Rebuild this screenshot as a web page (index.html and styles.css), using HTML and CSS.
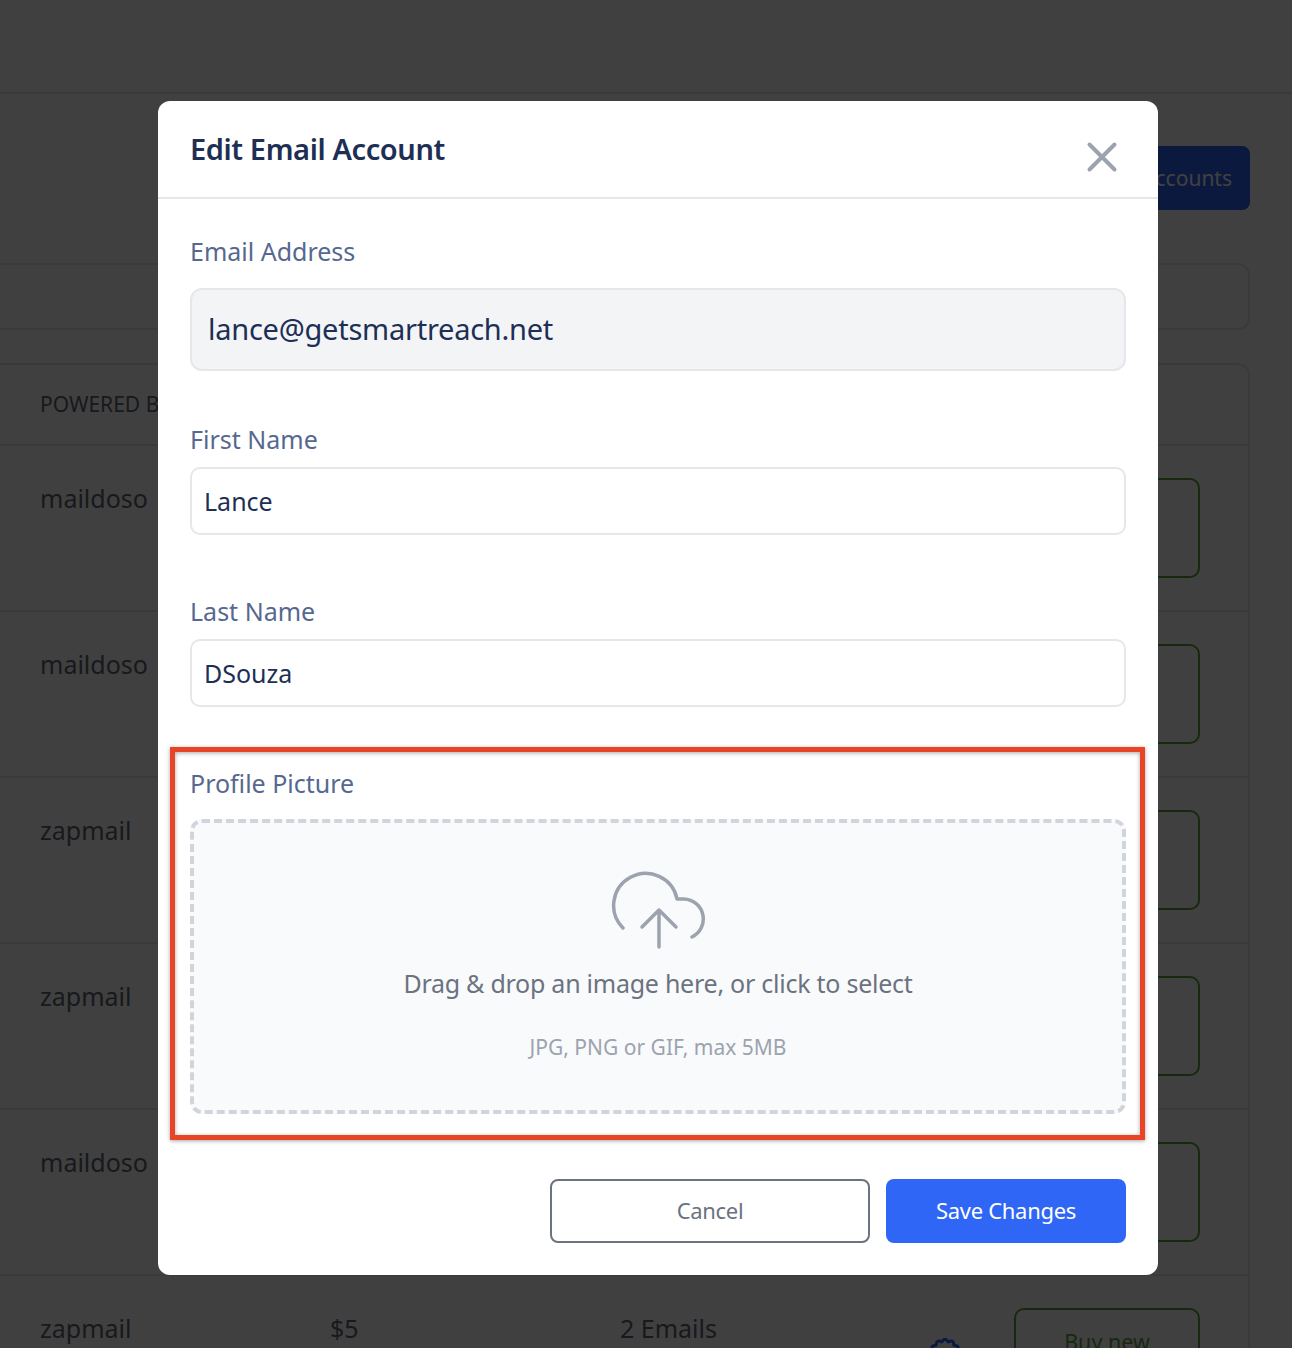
FILE: index.html
```html
<!DOCTYPE html>
<html lang="en">

<head>
    <meta charset="UTF-8">
    <meta name="viewport" content="width=device-width, initial-scale=1.0">
    <title>Email Accounts</title>
    <link rel="stylesheet" href="styles.css">
</head>

<body>
    <svg class="defs">
        <symbol id="badge-shape" viewBox="0 0 32 32">
            <path d="M12.800 3.900Q16 -1.500 19.200 3.900Q24.750 .840 24.800 7.200Q31.200 7.250 28.100 12.800Q33.500 16 28.100 19.200Q31.200 24.750 24.800 24.800Q24.750 31.200 19.200 28.100Q16 33.500 12.800 28.100Q7.250 31.200 7.200 24.800Q.840 24.750 3.900 19.200Q-1.500 16 3.900 12.800Q.840 7.250 7.200 7.200Q7.250 .840 12.800 3.900Z" />
        </symbol>
    </svg>
    <div class="page">
        <div class="topbar"></div>
        <div class="content">
            <div class="actions">
                <button class="primary-btn">Add Accounts</button>
            </div>
            <div class="search-box"></div>
            <div class="card">
                <div class="row head-row">
                    <div>POWERED BY</div>
                    <div>PRICE</div>
                    <div>INCLUDES</div>
                </div>
                <div class="row">
                    <div>maildoso</div>
                    <div>$5</div>
                    <div>2 Emails</div>
                    <div class="row-end">
                        <svg class="badge"><use href="#badge-shape" /></svg>
                        <button class="buy-btn">Buy new<br>accounts</button>
                    </div>
                </div>
                <div class="row">
                    <div>maildoso</div>
                    <div>$5</div>
                    <div>2 Emails</div>
                    <div class="row-end">
                        <svg class="badge"><use href="#badge-shape" /></svg>
                        <button class="buy-btn">Buy new<br>accounts</button>
                    </div>
                </div>
                <div class="row">
                    <div>zapmail</div>
                    <div>$5</div>
                    <div>2 Emails</div>
                    <div class="row-end">
                        <svg class="badge"><use href="#badge-shape" /></svg>
                        <button class="buy-btn">Buy new<br>accounts</button>
                    </div>
                </div>
                <div class="row">
                    <div>zapmail</div>
                    <div>$5</div>
                    <div>2 Emails</div>
                    <div class="row-end">
                        <svg class="badge"><use href="#badge-shape" /></svg>
                        <button class="buy-btn">Buy new<br>accounts</button>
                    </div>
                </div>
                <div class="row">
                    <div>maildoso</div>
                    <div>$5</div>
                    <div>2 Emails</div>
                    <div class="row-end">
                        <svg class="badge"><use href="#badge-shape" /></svg>
                        <button class="buy-btn">Buy new<br>accounts</button>
                    </div>
                </div>
                <div class="row">
                    <div>zapmail</div>
                    <div>$5</div>
                    <div>2 Emails</div>
                    <div class="row-end">
                        <svg class="badge"><use href="#badge-shape" /></svg>
                        <button class="buy-btn">Buy new<br>accounts</button>
                    </div>
                </div>
            </div>
        </div>
    </div>

    <div class="overlay">
        <div class="modal">
            <div class="modal-header">
                <h2>Edit Email Account</h2>
                <svg class="close-icon" viewBox="0 0 32 32">
                    <path d="M3.500 3.500L28.500 28.500M28.500 3.500L3.500 28.500" />
                </svg>
            </div>
            <div class="modal-body">
                <div class="field field-email">
                    <label for="email">Email Address</label>
                    <input class="input-disabled" type="text" id="email" value="lance@getsmartreach.net" disabled>
                </div>
                <div class="field">
                    <label for="firstname">First Name</label>
                    <input type="text" id="firstname" value="Lance">
                </div>
                <div class="field">
                    <label for="lastname">Last Name</label>
                    <input type="text" id="lastname" value="DSouza">
                </div>
                <div class="field field-picture">
                    <div class="highlight"></div>
                    <label>Profile Picture</label>
                    <div class="dropzone">
                        <svg class="upload-icon" viewBox="0 0 100 84">
                            <path d="M14 58A32 32 0 1 1 68 29H75A20 20 0 0 1 83 67" />
                            <path d="M50 40V77M33 57L50 40L67 57" />
                        </svg>
                        <div class="drop-text">Drag &amp; drop an image here, or click to select</div>
                        <div class="drop-hint">JPG, PNG or GIF, max 5MB</div>
                    </div>
                </div>
                <div class="modal-footer">
                    <button class="cancel-btn">Cancel</button>
                    <button class="save-btn">Save Changes</button>
                </div>
            </div>
        </div>
    </div>
</body>

</html>
```

FILE: styles.css
```css
* {
    margin: 0;
    padding: 0;
    box-sizing: border-box;
}

html,
body {
    height: 100%;
    overflow: hidden;
}

body {
    font-family: "Noto Sans", sans-serif;
    background: #fff;
}

.defs {
    display: none;
}

/* page behind the modal */
.topbar {
    height: 94px;
    border-bottom: 2px solid #e5e7eb;
}

.content {
    padding: 52px 42px 0 0;
}

.actions {
    display: flex;
    justify-content: flex-end;
}

.primary-btn {
    height: 64px;
    padding: 0 18px 1px;
    border: none;
    border-radius: 8px;
    background: #2f66f6;
    color: #fff;
    font: 21px "Noto Sans", sans-serif;
}

.search-box {
    height: 67px;
    margin-top: 53px;
    border: 2px solid #e5e7eb;
    border-left: none;
    border-radius: 0 12px 12px 0;
}

.card {
    margin-top: 33px;
    border: 2px solid #e5e7eb;
    border-left: none;
    border-radius: 0 12px 0 0;
}

.row {
    display: grid;
    grid-template-columns: 290px 290px 1fr auto;
    height: 166px;
    padding: 32px 48px 0 40px;
    border-top: 2px solid #e5e7eb;
    font-size: 25px;
    line-height: 40px;
    color: #5f6573;
}

.head-row {
    height: 79px;
    padding-top: 19px;
    border-top: none;
    font-size: 21px;
    color: #5f6573;
}

.row-end {
    display: flex;
    align-items: flex-start;
    gap: 53px;
}

.badge {
    width: 32px;
    height: 32px;
    margin-top: 30px;
    overflow: visible;
    fill: none;
    stroke: #2f66f6;
    stroke-width: 3;
    stroke-linejoin: round;
}

.buy-btn {
    width: 186px;
    height: 100px;
    flex-shrink: 0;
    border: 2px solid #5aa53c;
    border-radius: 10px;
    background: #fff;
    color: #5aa53c;
    font: 21.500px/32px "Noto Sans", sans-serif;
}

/* modal */
.overlay {
    position: fixed;
    inset: 0;
    padding: 101px 0 0 158px;
    background: rgba(0, 0, 0, 0.75);
}

.modal {
    width: 1000px;
    height: 1174px;
    border-radius: 12px;
    background: #fff;
}

.modal-header {
    display: flex;
    justify-content: space-between;
    height: 98px;
    padding: 26px 40px 0 32px;
    border-bottom: 2px solid #e5e7eb;
}

.modal-header h2 {
    font-size: 29px;
    line-height: 44px;
    font-weight: 600;
    letter-spacing: -0.4px;
    color: #1e2f55;
}

.close-icon {
    width: 32px;
    height: 32px;
    margin-top: 14px;
    fill: none;
    stroke: #9ca3af;
    stroke-width: 4;
    stroke-linecap: round;
}

.modal-body {
    padding: 32px;
    padding-left: 33px;
}

.field {
    margin-bottom: 57px;
}

.field-email {
    margin-bottom: 49px;
}

.field-picture {
    position: relative;
    margin-bottom: 65px;
}

.field label {
    display: block;
    height: 40px;
    margin-bottom: 7px;
    margin-left: -1px;
    font-size: 25px;
    line-height: 38px;
    color: #56688f;
}

.field-email label {
    line-height: 40px;
    margin-bottom: 17px;
}

.field-picture label {
    margin-bottom: 15px;
}

.field input {
    display: block;
    width: calc(100% + 1px);
    height: 68px;
    margin-left: -1px;
    padding: 0 12px;
    border: 2px solid #e5e7eb;
    border-radius: 10px;
    background: #fff;
    color: #1e2f55;
    font: 25px "Noto Sans", sans-serif;
}

.field .input-disabled {
    height: 83px;
    padding: 0 16px 2px;
    border-radius: 12px;
    background: #f3f4f6;
    font-size: 29px;
    letter-spacing: -0.25px;
}

.dropzone {
    display: flex;
    flex-direction: column;
    align-items: center;
    width: calc(100% + 1px);
    height: 295px;
    margin-left: -1px;
    padding-top: 47px;
    border: 4px dashed #d1d5db;
    border-radius: 12px;
    background: #f9fafb;
}

.upload-icon {
    width: 100px;
    height: 84px;
    margin-left: 2px;
    fill: none;
    stroke: #9ca3af;
    stroke-width: 3.500;
    stroke-linecap: round;
    stroke-linejoin: round;
}

.drop-text {
    margin-top: 9px;
    font-size: 25px;
    line-height: 40px;
    letter-spacing: -0.25px;
    color: #6b7280;
}

.drop-hint {
    margin-top: 28px;
    font-size: 21px;
    line-height: 32px;
    color: #9ca3af;
}

/* red box drawn over the screenshot */
.highlight {
    position: absolute;
    top: -17px;
    right: -19px;
    bottom: -26px;
    left: -21px;
    border: 5px solid #ea4426;
    box-shadow: 0 1px 4px rgba(0, 0, 0, 0.35), inset 0 1px 4px rgba(0, 0, 0, 0.35);
    pointer-events: none;
}

.modal-footer {
    display: flex;
    justify-content: flex-end;
    gap: 16px;
}

.cancel-btn,
.save-btn {
    height: 64px;
    padding-bottom: 2px;
    border-radius: 8px;
    font: 22px "Noto Sans", sans-serif;
    letter-spacing: -0.3px;
}

.cancel-btn {
    width: 320px;
    border: 2px solid #6b7280;
    background: #fff;
    color: #6b7280;
}

.save-btn {
    width: 240px;
    border: none;
    background: #2f66f6;
    color: #fff;
}
```
